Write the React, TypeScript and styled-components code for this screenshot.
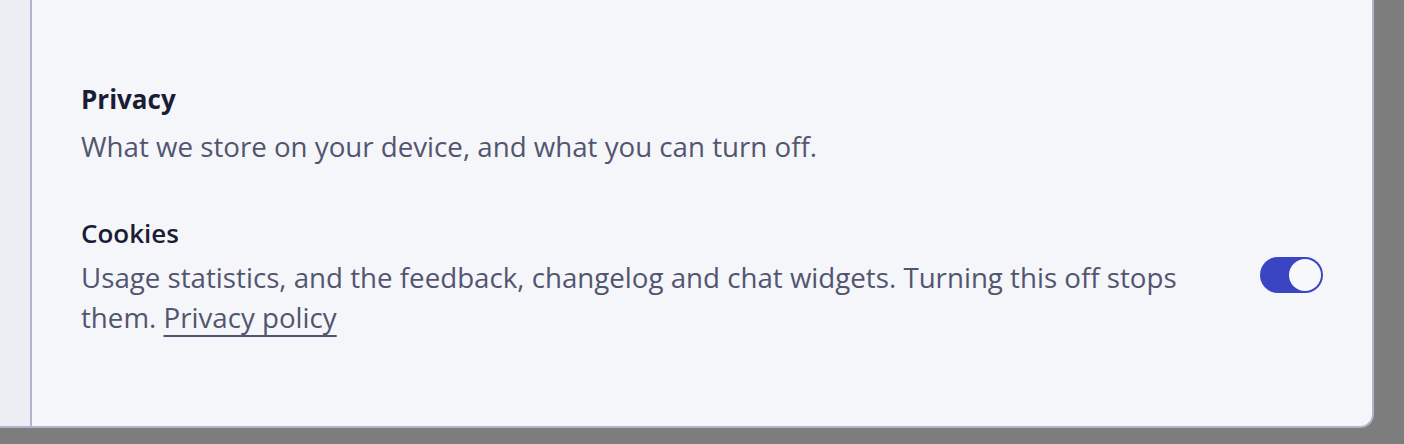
import React, { useState } from 'react';
import styled, { createGlobalStyle } from 'styled-components';

const GlobalStyle = createGlobalStyle`
  html, body {
    margin: 0;
    padding: 0;
    background: #7d7d7d;
  }
  body {
    width: 1404px;
    height: 444px;
    overflow: hidden;
    font-family: 'Open Sans', 'Noto Sans', sans-serif;
  }
`;

const Window = styled.div`
  display: flex;
  width: 1372px;
  height: 426px;
  border-right: 2px solid #b2b5c9;
  border-bottom: 2px solid #b2b5c9;
  border-bottom-right-radius: 14px;
  overflow: hidden;
  background: #f5f6fa;
`;

const Sidebar = styled.aside`
  flex: 0 0 30px;
  background: #eceef4;
  border-right: 2px solid #b2b5c9;
`;

const Content = styled.main`
  flex: 1;
  padding: 83px 49px 0 49px;
  display: flex;
  flex-direction: column;
`;

const SectionTitle = styled.h2`
  margin: 0;
  font-size: 26px;
  line-height: 32px;
  font-weight: 700;
  color: #1b1d35;
`;

const SectionText = styled.p`
  margin: 11px 0 0;
  font-size: 27.7px;
  line-height: 40px;
  color: #52556f;
`;

const SettingRow = styled.div`
  margin-top: 51px;
  display: flex;
  align-items: center;
  gap: 64px;
`;

const SettingText = styled.div`
  flex: 1;
  min-width: 0;
`;

const SettingLabel = styled.div`
  font-size: 26px;
  line-height: 32px;
  font-weight: 600;
  color: #1b1d35;
`;

const SettingHint = styled.p<{ $gap?: number }>`
  margin: ${(p) => p.$gap ?? 0}px 0 0;
  font-size: 27.7px;
  line-height: 40px;
  color: #52556f;
`;

const PolicyLink = styled.a`
  color: inherit;
  text-decoration: underline;
  text-decoration-thickness: 2px;
  text-underline-offset: 7px;
`;

const Switch = styled.button<{ $on: boolean }>`
  flex: 0 0 auto;
  position: relative;
  width: 63px;
  height: 36px;
  margin-bottom: 4px;
  padding: 0;
  border: none;
  border-radius: 18px;
  background: ${(p) => (p.$on ? '#3a45c3' : '#b2b5c9')};
  cursor: pointer;
`;

const Knob = styled.span<{ $on: boolean }>`
  position: absolute;
  top: 2px;
  left: ${(p) => (p.$on ? '29px' : '2px')};
  width: 32px;
  height: 32px;
  border-radius: 50%;
  background: #f7f8fc;
  transition: left 0.15s ease;
`;

export default function App() {
  const [cookies, setCookies] = useState(true);

  return (
    <>
      <GlobalStyle />
      <Window>
        <Sidebar />
        <Content>
          <SectionTitle>Privacy</SectionTitle>
          <SectionText>What we store on your device, and what you can turn off.</SectionText>

          <SettingRow>
            <SettingText>
              <SettingLabel>Cookies</SettingLabel>
              <SettingHint $gap={8}>
                Usage statistics, and the feedback, changelog and chat widgets. Turning this off stops
                them. <PolicyLink href="#privacy">Privacy policy</PolicyLink>
              </SettingHint>
            </SettingText>
            <Switch
              role="switch"
              aria-checked={cookies}
              aria-label="Cookies"
              $on={cookies}
              onClick={() => setCookies(!cookies)}
            >
              <Knob $on={cookies} />
            </Switch>
          </SettingRow>
        </Content>
      </Window>
    </>
  );
}
